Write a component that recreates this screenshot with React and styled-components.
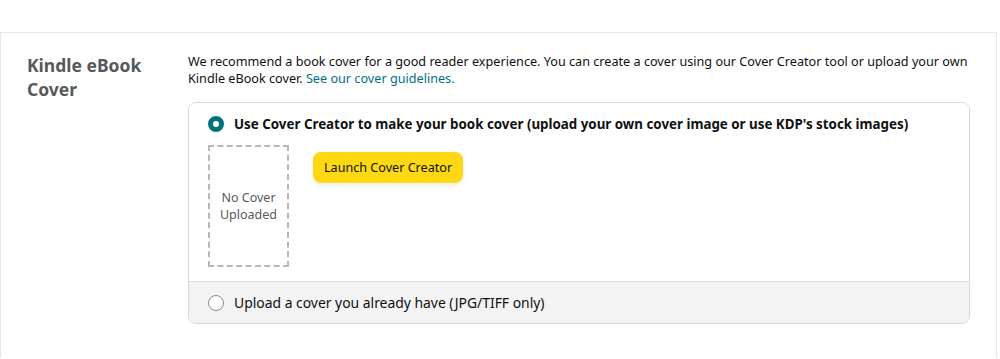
import React from 'react'
import styled, { createGlobalStyle } from 'styled-components'

const GlobalStyle = createGlobalStyle`
  html, body {
    margin: 0;
    padding: 0;
    background: #ffffff;
  }
  body {
    font-family: "Noto Sans", "Open Sans", Arial, sans-serif;
    color: #0f1111;
  }
`

const Page = styled.div`
  padding-top: 32px;
  width: 997px;
`

const Section = styled.section`
  display: flex;
  border: 1px solid #e7e7e7;
  border-bottom: none;
  min-height: 326px;
  padding: 20px 26px 0 26px;
  box-sizing: border-box;
`

const Label = styled.h2`
  width: 161px;
  flex-shrink: 0;
  margin: 0;
  font-size: 17.5px;
  line-height: 24px;
  font-weight: 700;
  color: #565959;
`

const Body = styled.div`
  flex: 1;
`

const Intro = styled.p`
  margin: 0 0 15px 0;
  font-size: 12.65px;
  line-height: 17px;
  color: #0f1111;
`

const Link = styled.a`
  color: #007185;
  text-decoration: none;
`

const Card = styled.div`
  border: 1px solid #d5d9d9;
  border-radius: 8px;
  overflow: hidden;
`

const Option = styled.div`
  padding: ${props => (props.$muted ? '11px 19px 10px' : '11px 19px 14px')};
  background: ${props => (props.$muted ? '#f3f3f3' : '#ffffff')};
  border-top: ${props => (props.$muted ? '1px solid #dcdcdc' : 'none')};
`

const RadioRow = styled.label`
  display: flex;
  align-items: center;
  gap: 10px;
  font-size: ${props => (props.$checked ? '13.35px' : '13.9px')};
  line-height: 20px;
  font-weight: ${props => (props.$checked ? 700 : 400)};
  color: #0f1111;
`

const Radio = styled.span`
  width: 16px;
  height: 16px;
  box-sizing: border-box;
  border-radius: 50%;
  flex-shrink: 0;
  background: #ffffff;
  border: ${props => (props.$checked ? '5px solid #00727e' : '1px solid #888c8c')};
`

const CoverArea = styled.div`
  display: flex;
  align-items: flex-start;
  gap: 24px;
  margin-top: 11px;
`

const Placeholder = styled.div`
  width: 81px;
  height: 122px;
  box-sizing: border-box;
  border: 2px dashed #b7b7b7;
  display: flex;
  align-items: center;
  justify-content: center;
  text-align: center;
  font-size: 12.5px;
  line-height: 17px;
  color: #565959;
  padding-bottom: 1px;
`

const LaunchButton = styled.button`
  margin-top: 7px;
  height: 31px;
  padding: 0 11px;
  border: none;
  border-radius: 8px;
  background: #ffd814;
  box-shadow: 0 2px 5px rgba(213, 217, 217, 0.5);
  font-family: inherit;
  font-size: 12.6px;
  color: #0f1111;
  cursor: pointer;
`

const App = () => (
  <>
    <GlobalStyle />
    <Page>
      <Section>
        <Label>
          Kindle eBook
          <br />
          Cover
        </Label>
        <Body>
          <Intro>
            We recommend a book cover for a good reader experience. You can create a cover using our Cover Creator tool or upload your own Kindle eBook cover.
            {' '}
            <Link href="#">See our cover guidelines.</Link>
          </Intro>
          <Card>
            <Option>
              <RadioRow $checked>
                <Radio $checked />
                Use Cover Creator to make your book cover (upload your own cover image or use KDP&apos;s stock images)
              </RadioRow>
              <CoverArea>
                <Placeholder>
                  No Cover
                  <br />
                  Uploaded
                </Placeholder>
                <LaunchButton>Launch Cover Creator</LaunchButton>
              </CoverArea>
            </Option>
            <Option $muted>
              <RadioRow>
                <Radio />
                Upload a cover you already have (JPG/TIFF only)
              </RadioRow>
            </Option>
          </Card>
        </Body>
      </Section>
    </Page>
  </>
)

export default App
